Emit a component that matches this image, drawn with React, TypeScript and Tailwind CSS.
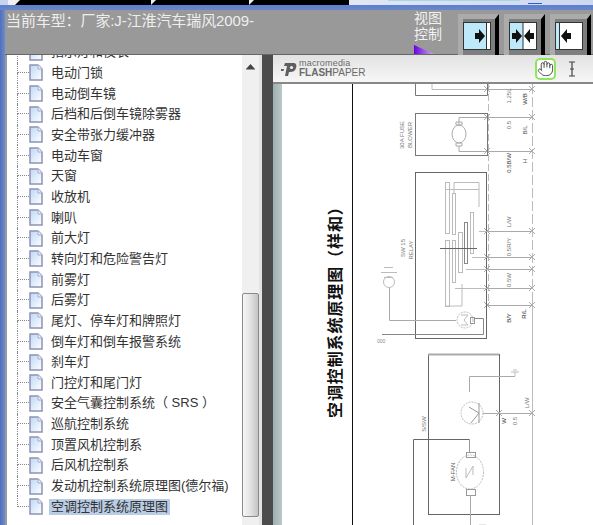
import React from "react";
import { Hand } from "lucide-react";

const items = [
  "指示灯和仪表",
  "电动门锁",
  "电动倒车镜",
  "后档和后倒车镜除雾器",
  "安全带张力缓冲器",
  "电动车窗",
  "天窗",
  "收放机",
  "喇叭",
  "前大灯",
  "转向灯和危险警告灯",
  "前雾灯",
  "后雾灯",
  "尾灯、停车灯和牌照灯",
  "倒车灯和倒车报警系统",
  "刹车灯",
  "门控灯和尾门灯",
  "安全气囊控制系统（ SRS ）",
  "巡航控制系统",
  "顶置风机控制系",
  "后风机控制系",
  "发动机控制系统原理图(德尔福)",
  "空调控制系统原理图",
];

function DocIcon() {
  return (
    <svg width="14" height="17" viewBox="0 0 14 17" className="shrink-0">
      <defs>
        <linearGradient id="docfill" x1="0" y1="0" x2="1" y2="1">
          <stop offset="0" stopColor="#bcd7f7" />
          <stop offset="1" stopColor="#ffffff" />
        </linearGradient>
      </defs>
      <path d="M1 1H9L13 5V16H1Z" fill="url(#docfill)" stroke="#8d92b5" strokeWidth="1.5" />
      <path d="M9 1V5H13" fill="#eef4fd" stroke="#a4a9c6" strokeWidth="1" />
    </svg>
  );
}

function TreeRow({ label, last, selected }: { label: string; last: boolean; selected: boolean }) {
  return (
    <div className="flex h-[20.67px] shrink-0 items-center pl-[10px]">
      <div className="flex h-full w-[12px] shrink-0 flex-col">
        <div className="h-1/2 border-b border-l border-dotted border-[#888]" />
        <div className={last ? "h-1/2" : "h-1/2 border-l border-dotted border-[#888]"} />
      </div>
      <DocIcon />
      <span
        className={
          "ml-[6px] whitespace-nowrap px-[2px] text-[13px] leading-[16px] text-[#333] " +
          (selected ? "bg-[#b9cde5]" : "")
        }
      >
        {label}
      </span>
    </div>
  );
}

function Arrow({ dir, x }: { dir: "r" | "l"; x: number }) {
  const d =
    dir === "r"
      ? `M${x} 11H${x + 4}V7L${x + 10} 14L${x + 4} 21V17H${x}Z`
      : `M${x + 10} 11H${x + 6}V7L${x} 14L${x + 6} 21V17H${x + 10}Z`;
  return <path d={d} fill="#111" />;
}

function ViewButton({ kind }: { kind: 0 | 1 | 2 }) {
  return (
    <div className="flex h-[41px] w-[41px] items-start border-t-[5px] border-r-[4px] border-l-[5px] border-t-[#ababab] border-r-black border-l-[#ababab] bg-[#7e7e7e] pt-[3px]">
      <svg width="28" height="28" viewBox="0 0 28 28" className="block shrink-0">
        <rect x="0.5" y="0.5" width="27" height="27" fill="#fff" stroke="#333" />
        {kind === 0 && (
          <>
            <rect x="1" y="1" width="22" height="26" fill="#bde9fb" />
            <path d="M23.5 1V27" stroke="#333" />
            <Arrow dir="r" x={12} />
          </>
        )}
        {kind === 1 && (
          <>
            <rect x="1" y="1" width="13" height="26" fill="#bde9fb" />
            <path d="M14 1V27" stroke="#333" />
            <Arrow dir="r" x={3} />
            <Arrow dir="l" x={15} />
          </>
        )}
        {kind === 2 && (
          <>
            <rect x="1" y="1" width="3" height="26" fill="#bde9fb" />
            <path d="M4.5 1V27" stroke="#333" />
            <Arrow dir="l" x={6} />
          </>
        )}
      </svg>
    </div>
  );
}

function Label({ x, y, s, fill = "#777" }: { x: number; y: number; s: string; fill?: string }) {
  return (
    <text
      transform={`translate(${x} ${y}) rotate(-90)`}
      fontSize="6"
      textAnchor="middle"
      fill={fill}
      fontFamily="Liberation Sans, sans-serif"
    >
      {s}
    </text>
  );
}

function Cross({ x, y }: { x: number; y: number }) {
  return <path d={`M${x - 3} ${y - 3}L${x + 3} ${y + 3}M${x + 3} ${y - 3}L${x - 3} ${y + 3}`} stroke="#aaa" fill="none" />;
}

function Diagram() {
  const links = [89, 117, 151, 231, 257, 269, 288, 305];
  return (
    <svg viewBox="282 84 311 441" width="311" height="441" className="block">
      <path d="M352.5 84V525" stroke="#111" />
      <text
        transform="translate(341 418) rotate(-90)"
        fontSize="16"
        fontWeight="700"
        letterSpacing="0.9"
        fill="#111"
        fontFamily="Noto Sans CJK SC, sans-serif"
      >
        空调控制系统原理图（样和）
      </text>

      {/* bus lines */}
      <path d="M488.5 84V305" stroke="#bbb" strokeDasharray="7 3" />
      <path d="M532.5 84V300" stroke="#bbb" strokeDasharray="10 3" />
      <path d="M532.5 300V525" stroke="#bbb" />
      {links.map((y) => (
        <g key={y}>
          <path d={`M488 ${y}.5H532`} stroke="#aaa" />
          <Cross x={487} y={y} />
          <Cross x={532} y={y} />
        </g>
      ))}

      {/* first boxes */}
      <path d="M415.5 84V95.5H487.5V84" fill="none" stroke="#777" />
      <path d="M432 84V89.5H487" fill="none" stroke="#bbb" />
      <rect x="415.5" y="113.5" width="72" height="42" fill="none" stroke="#777" />
      <ellipse cx="459" cy="134" rx="7" ry="9" fill="none" stroke="#aaa" />
      <path d="M459 125V117.5H487M456 122H462V125H456ZM456 143H462V146H456ZM459 146V151.5H487" fill="none" stroke="#aaa" />

      {/* relay box */}
      <rect x="415.5" y="172.5" width="71" height="166" fill="none" stroke="#666" />
      <rect x="445.5" y="182.5" width="4" height="51" fill="none" stroke="#bbb" />
      <rect x="452.5" y="193.5" width="3" height="41" fill="none" stroke="#bbb" />
      <rect x="445.5" y="240.5" width="4" height="66" fill="none" stroke="#bbb" />
      <rect x="452.5" y="240.5" width="3" height="42" fill="none" stroke="#bbb" />
      <rect x="458.5" y="232.5" width="4" height="40" fill="none" stroke="#bbb" />
      <rect x="464.5" y="222.5" width="3" height="41" fill="none" stroke="#888" />
      <rect x="470.5" y="212.5" width="3" height="41" fill="none" stroke="#bbb" />
      <path d="M440 248.5H477" stroke="#666" />
      <path d="M454 193V182.5H479V207M445 189.5H479M479 231.5H487M472 257.5H487M466 269.5H487M455 288.5H487M462 284V306H445" fill="none" stroke="#bbb" />

      {/* left symbol */}
      <path d="M384 267.5H393M381 272.5H397M384 277.5H393" stroke="#bbb" />
      <circle cx="389" cy="282" r="5.5" fill="none" stroke="#bbb" />
      <path d="M389.5 288V320.5H456" fill="none" stroke="#aaa" />
      <circle cx="465" cy="320" r="8" fill="none" stroke="#bbb" strokeDasharray="2 1" />
      <path d="M461 315H468L464 320L468 325H461" fill="none" stroke="#bbb" />
      <rect x="470.5" y="317.5" width="4" height="6" fill="none" stroke="#999" />
      <path d="M474 318.5H483.5V334.5H382" fill="none" stroke="#888" />
      <text x="377" y="343" fontSize="5" fill="#888" fontFamily="Liberation Sans, sans-serif">000</text>

      {/* motor box */}
      <rect x="428.5" y="354.5" width="71" height="160" fill="none" stroke="#666" />
      <path d="M428 354.5H499" stroke="#aaa" strokeWidth="2" />
      <circle cx="472" cy="413" r="11" fill="none" stroke="#bbb" strokeDasharray="2 1" />
      <path d="M469 407L479 413L471 423M479 403V423" fill="none" stroke="#999" />
      <path d="M469.5 392V376.5H515" fill="none" stroke="#aaa" />
      <path d="M511 372H519M513 370H517M515 372V376" stroke="#bbb" fill="none" />
      <path d="M483 413.5H532" stroke="#aaa" />
      <Cross x={499} y={413} />
      <Cross x={532} y={413} />
      <path d="M413.5 525V439.5H470" fill="none" stroke="#666" />
      <path d="M469.5 439V452" stroke="#999" />
      <rect x="466.5" y="452.5" width="9" height="5" fill="none" stroke="#999" />
      <ellipse cx="470" cy="472" rx="13.5" ry="17" fill="none" stroke="#bbb" strokeDasharray="2 1" />
      <path d="M466 468V478L473 466V475" fill="none" stroke="#bbb" />
      <rect x="466.5" y="489.5" width="9" height="6" fill="none" stroke="#999" />
      <path d="M470.5 495V525" stroke="#aaa" />
      <path d="M479 525H486" stroke="#ccc" />

      {/* small labels */}
      <Label x={404} y={135} s="30A FUSE" />
      <Label x={412} y={135} s="BLOWER" />
      <Label x={511} y={96} s="1.25L" />
      <Label x={527} y={99} s="W/B" fill="#333" />
      <Label x={511} y={125} s="0.5" />
      <Label x={527} y={130} s="B/L" fill="#555" />
      <Label x={511} y={163} s="0.5B/W" fill="#444" />
      <Label x={527} y={161} s="H" fill="#555" />
      <Label x={405} y={248} s="SW 15" />
      <Label x={413} y={250} s="RELAY" />
      <Label x={511} y={222} s="L/W" />
      <Label x={511} y={247} s="0.5R/Y" />
      <Label x={511} y={280} s="0.5W" />
      <Label x={511} y={318} s="B/Y" fill="#333" />
      <Label x={526} y={314} s="R/L" fill="#222" />
      <Label x={426} y={424} s="S/SW" />
      <Label x={455} y={472} s="M-FAN" fill="#555" />
      <Label x={506} y={421} s="W" fill="#333" />
      <Label x={517} y={421} s="0.5" />
      <Label x={529} y={403} s="L/W" />
    </svg>
  );
}

export default function App() {
  return (
    <div className="flex h-[525px] w-[593px] flex-col overflow-hidden bg-[#999] font-['Liberation_Sans','Noto_Sans_CJK_SC',sans-serif]">
      {/* browser strip */}
      <div className="flex h-[5px] shrink-0">
        <div className="h-full w-[8px] bg-[#c8d4ee]" />
        <div className="h-full w-[7px] bg-[#f0f0f0]" />
        <div className="flex h-full w-[334px] items-start bg-black">
          <svg width="334" height="5" viewBox="0 0 334 5" className="block">
            <path d="M0 5L5 0H0Z" fill="#eee" />
            <path d="M136 5L141 0H136Z" fill="#eee" />
            <path d="M234 5L239 0H234Z" fill="#eee" />
          </svg>
        </div>
        <div className="flex h-full flex-1 items-start bg-gradient-to-r from-[#e2e7f6] to-[#cdd7f0] pl-[39px]">
          <div className="h-px w-[132px] bg-[#a9d5ea]" />
          <span className="ml-[8px] h-[4px] w-[14px] border-b border-[#2a5fc4]" />
        </div>
      </div>
      <div className="h-[5px] shrink-0 bg-gradient-to-b from-[#5a80d2] to-[#6a86c6]" />

      <div className="flex min-h-0 flex-1">
        <div className="w-[5px] shrink-0 bg-gradient-to-r from-[#4f6fb8] to-[#6c8bd0]" />
        <div className="flex min-w-0 flex-1 flex-col">
          {/* header */}
          <div className="flex h-[45px] shrink-0 items-start border-b border-[#666] bg-[#999]">
            <div className="w-[409px] pt-[1px] pl-[1px] text-[15px] leading-[20px] tracking-[-0.1px] whitespace-nowrap text-[#eeeeee]">
              当前车型：厂家:J-江淮汽车瑞风2009-
            </div>
            <div className="flex w-[44px] shrink-0 flex-col">
              <div className="text-[14px] leading-[16px] text-[#f2f2f2]">
                视图
                <br />
                控制
              </div>
              <svg width="20" height="9" viewBox="0 0 20 9" className="mt-[3px] block">
                <defs>
                  <linearGradient id="pur" x1="0" y1="0" x2="1" y2="0">
                    <stop offset="0" stopColor="#6a00e0" />
                    <stop offset="1" stopColor="#c9b0ea" />
                  </linearGradient>
                </defs>
                <path d="M0 0L20 9H0Z" fill="url(#pur)" />
              </svg>
            </div>
            <div className="flex gap-[5px] pt-[4px]">
              <ViewButton kind={0} />
              <ViewButton kind={1} />
              <ViewButton kind={2} />
            </div>
          </div>

          <div className="flex min-h-0 flex-1">
            {/* tree panel */}
            <div className="flex w-[257px] shrink-0 pl-[2px]">
              <div className="min-w-0 flex-1 overflow-hidden bg-white">
                <div className="-mt-[13px] flex flex-col">
                  {items.map((t, i) => (
                    <TreeRow key={t} label={t} last={i === items.length - 1} selected={i === items.length - 1} />
                  ))}
                </div>
              </div>
              <div className="flex w-[17px] shrink-0 flex-col bg-[#f0f0f0]">
                <div className="flex h-[238px] shrink-0 justify-center pt-[9px]">
                  <svg width="9" height="6" viewBox="0 0 9 6" className="block">
                    <path d="M4.5 0L9 5H0Z" fill="#444" />
                    <path d="M0 5.5H9" stroke="#999" />
                  </svg>
                </div>
                <div className="h-[224px] shrink-0 rounded-[2px] border border-[#8a8a8a] bg-gradient-to-r from-[#f6f6f6] via-[#e2e2e2] to-[#c4c4c4]" />
              </div>
              <div className="w-[3px] shrink-0 bg-[#e4e4e4]" />
            </div>
            {/* splitter */}
            <div className="w-[11px] shrink-0 bg-[#4c4c4c]" />
            <div className="flex min-w-0 flex-1 flex-col">
              {/* toolbar */}
              <div className="flex h-[29px] shrink-0 items-center border-b-2 border-[#888] bg-gradient-to-b from-[#e2e2e2] to-[#f7f7f7] pl-[8px]">
                <svg width="16" height="16" viewBox="0 0 16 16" className="shrink-0">
                  <path d="M4 15L6 5H3L4 2H12C15 2 16 4 15 7C14 10 12 11 9 11H8L7 15Z" fill="#5e5e5e" />
                  <circle cx="10.5" cy="6.5" r="1.6" fill="#eee" />
                  <path d="M0 8H3L2.5 10H0Z" fill="#5e5e5e" />
                </svg>
                <div className="ml-[2px] flex w-[66px] shrink-0 flex-col text-[#6a6a6a]">
                  <span className="text-[9px] leading-[9px] tracking-[0.2px]">macromedia</span>
                  <span className="text-[10px] leading-[10px]">
                    <b className="font-bold">FLASH</b>PAPER
                  </span>
                </div>
                <div className="ml-[170px] flex h-[22px] w-[21px] shrink-0 items-center justify-center rounded-[5px] border-2 border-[#8ee65c] bg-white">
                  <Hand size={17} strokeWidth={1.2} color="#333" />
                </div>
                <svg width="10" height="16" viewBox="0 0 10 16" className="ml-[11px] shrink-0">
                  <path d="M2 1H8M5 1V15M2 15H8M3 8H7" stroke="#444" strokeWidth="1.2" fill="none" />
                </svg>
              </div>
              <div className="flex min-h-0 flex-1">
                <div className="w-[9px] shrink-0 bg-gradient-to-r from-[#9fb0b0] to-[#bcc8c8]" />
                <div className="min-w-0 flex-1 overflow-hidden bg-white">
                  <Diagram />
                </div>
              </div>
            </div>
          </div>
        </div>
      </div>
    </div>
  );
}
